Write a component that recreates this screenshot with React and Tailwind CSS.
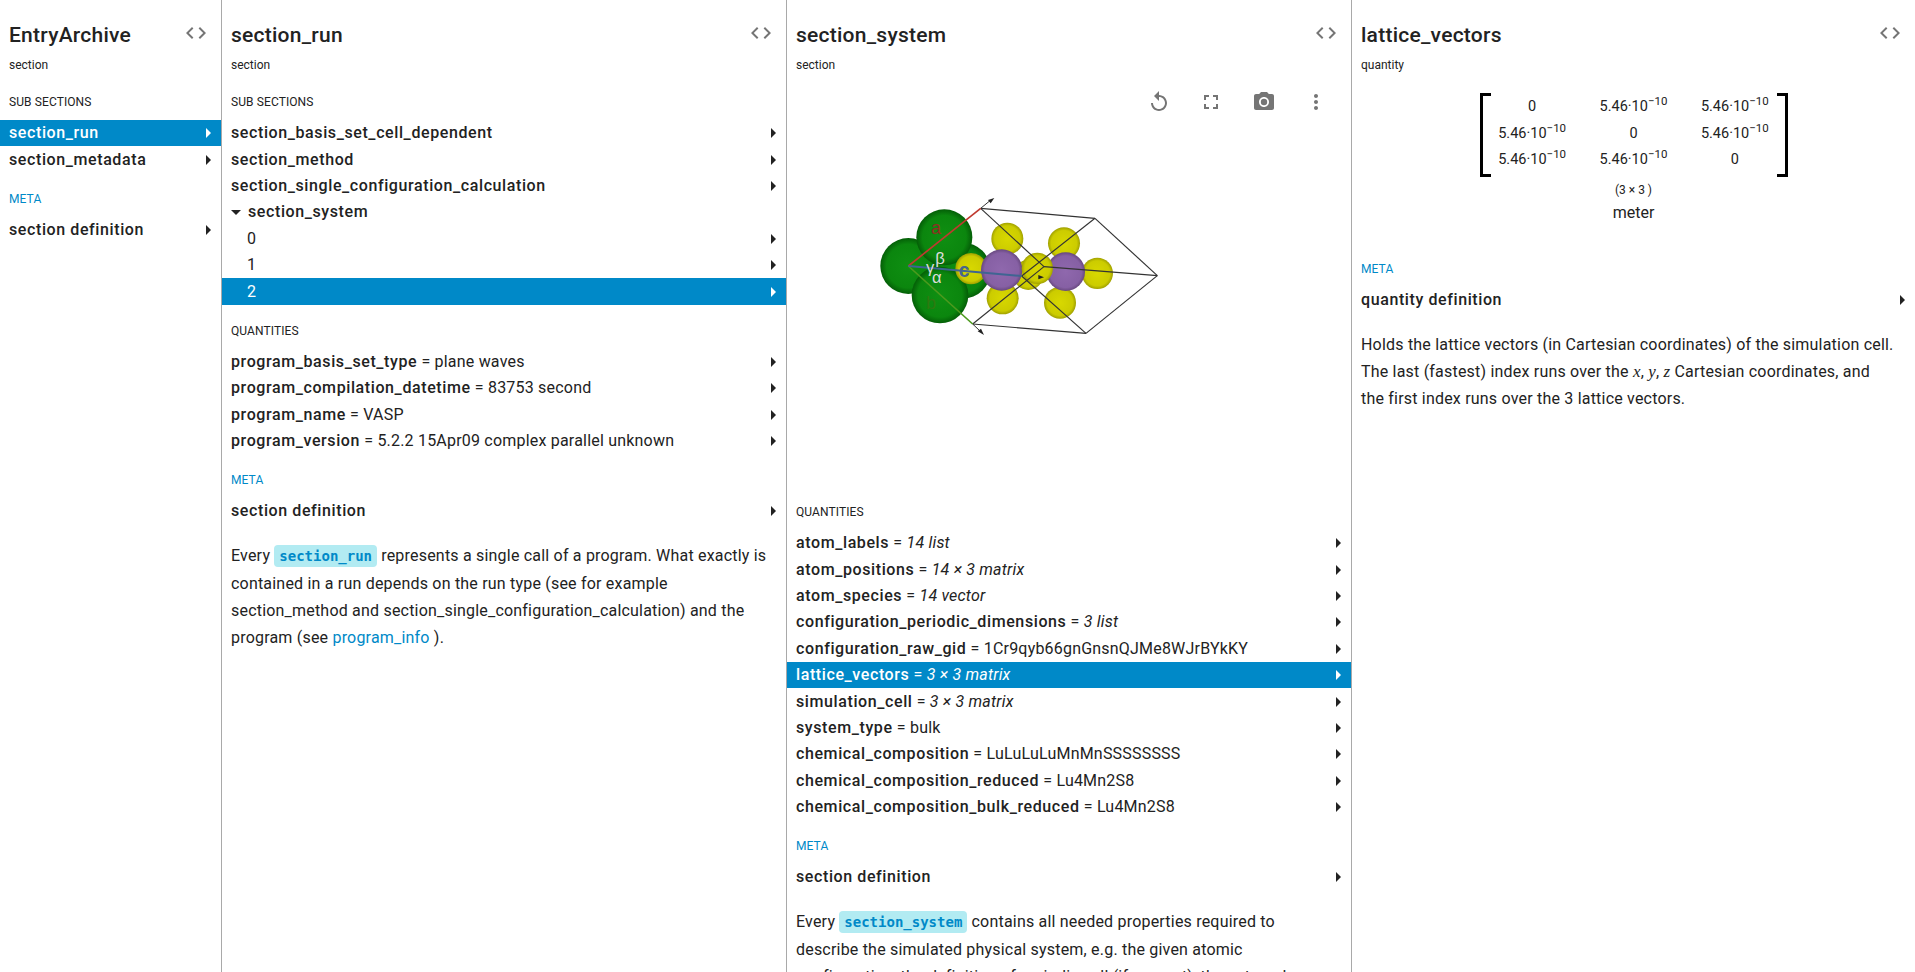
import { MdArrowDropDown, MdArrowRight, MdCameraAlt, MdCode, MdFullscreen, MdMoreVert, MdReplay } from "react-icons/md";

const Column = ({ title, kind, className, children }) => (
  <div className={`h-[972px] shrink-0 overflow-hidden border-r border-[#a9a9a9] last:border-r-0 ${className}`}>
    <div className="relative px-[9px] pt-[20px]">
      <h2 className="h-[30px] text-[21px] leading-[30px] font-medium tracking-[0.25px]">{title}</h2>
      <div className="mt-[6px] h-[18px] text-[12px] leading-[18px]">{kind}</div>
      <MdCode className="absolute right-[13px] top-[21px] text-[#757575]" size={24} />
    </div>
    {children}
  </div>
);

const Label = ({ children, meta, className = "mt-[17px]" }) => (
  <div className={`mb-[9px] h-[18px] px-[9px] text-[12px] leading-[18px] tracking-[0.1px] ${meta ? "text-[#0089c8]" : ""} ${className}`}>
    {children}
  </div>
);

const Name = ({ children }) => <span className="font-medium tracking-[0.6px]">{children}</span>;

const Row = ({ children, active, inset }) => (
  <div
    className={`flex h-[26.4px] items-center pr-[1px] text-[16px] tracking-[0.2px] ${inset ? "pl-[25px]" : "pl-[9px]"} ${
      active ? "bg-[#0089c8] text-white" : ""
    }`}
  >
    <div className="min-w-0 flex-1 truncate">{children}</div>
    <MdArrowRight size={24} className="shrink-0" />
  </div>
);

const Q = ({ name, value, italic, active }) => (
  <Row active={active}>
    <Name>{name}</Name> = {italic ? <i>{value}</i> : value}
  </Row>
);

const Code = ({ children }) => (
  <code className="rounded-[4px] bg-[#b2ebf2] px-[5px] py-[3px] font-['DejaVu_Sans_Mono',monospace] text-[14px] font-bold tracking-normal text-[#0089c8]">
    {children}
  </code>
);

const Para = ({ children, className = "mt-[17px]" }) => (
  <p className={`px-[9px] text-[16px] leading-[27px] tracking-[0.2px] ${className}`}>{children}</p>
);

const Math = ({ children }) => <i className="font-['Liberation_Serif',serif] text-[17px]">{children}</i>;

const Sphere = ({ x, y, r, fill }) => <circle cx={x} cy={y} r={r} fill={`url(#${fill})`} />;

const Structure = () => {
  const O = [205, 318];
  const a = [422, 145];
  const b = [398, 492];
  const c = [545, 348];
  const ab = [612, 320];
  const ac = [765, 175];
  const bc = [738, 520];
  const abc = [952, 347];
  const edges = [[a, ab], [a, ac], [b, ab], [b, bc], [c, ac], [c, bc], [ab, abc], [ac, abc], [bc, abc]];
  return (
    <svg viewBox="0 0 1020 570" className="ml-[53px] mt-[34px] block h-[190px] w-[340px]">
      <defs>
        <radialGradient id="green">
          <stop offset="0%" stopColor="#0f8f12" />
          <stop offset="78%" stopColor="#0b860e" />
          <stop offset="100%" stopColor="#045e07" />
        </radialGradient>
        <radialGradient id="yellow">
          <stop offset="0%" stopColor="#d8d800" />
          <stop offset="80%" stopColor="#cccc00" />
          <stop offset="100%" stopColor="#a0a000" />
        </radialGradient>
        <radialGradient id="purple">
          <stop offset="0%" stopColor="#8f68ad" />
          <stop offset="82%" stopColor="#8660a4" />
          <stop offset="100%" stopColor="#68487f" />
        </radialGradient>
      </defs>
      <Sphere x={368} y={332} r={84} fill="green" />
      <Sphere x={205} y={318} r={84} fill="green" />
      <Sphere x={313} y={232} r={84} fill="green" />
      <Sphere x={300} y={405} r={85} fill="green" />
      <Sphere x={393} y={326} r={47} fill="yellow" />
      <Sphere x={565} y={345} r={45} fill="yellow" />
      <Sphere x={502} y={236} r={48} fill="yellow" />
      <Sphere x={672} y={250} r={48} fill="yellow" />
      <Sphere x={772} y={340} r={47} fill="yellow" />
      <Sphere x={488} y={415} r={48} fill="yellow" />
      <Sphere x={660} y={428} r={48} fill="yellow" />
      <Sphere x={485} y={330} r={62} fill="purple" />
      <Sphere x={677} y={335} r={58} fill="purple" />
      <Sphere x={592} y={325} r={47} fill="yellow" />
      {edges.map(([p, q], i) => (
        <line key={i} x1={p[0]} y1={p[1]} x2={q[0]} y2={q[1]} stroke="#333" strokeWidth="3.5" />
      ))}
      <line x1={a[0]} y1={a[1]} x2="450" y2="122" stroke="#333" strokeWidth="3" />
      <polygon points="463,114 444,120 452,130" fill="#222" />
      <line x1={b[0]} y1={b[1]} x2="420" y2="513" stroke="#333" strokeWidth="3" />
      <polygon points="432,525 413,514 423,506" fill="#222" />
      <polygon points="612,352 595,345 595,358" fill="#222" />
      <line x1={O[0]} y1={O[1]} x2={a[0]} y2={a[1]} stroke="#c0392f" strokeWidth="5" />
      <line x1={O[0]} y1={O[1]} x2={b[0]} y2={b[1]} stroke="#4c9a1d" strokeWidth="5" />
      <line x1={O[0]} y1={O[1]} x2={c[0]} y2={c[1]} stroke="#3f6592" strokeWidth="6" />
      <g fontFamily="'Liberation Sans', sans-serif" fontSize="54">
        <text x="273" y="222" fill="#8e2f22">a</text>
        <text x="258" y="446" fill="#2c7a10">b</text>
        <text x="356" y="352" fill="#47658c" fontWeight="700" fontSize="58">c</text>
        <text x="276" y="370" fill="#dddddd" fontSize="50">α</text>
        <text x="286" y="312" fill="#dddddd" fontSize="50">β</text>
        <text x="258" y="338" fill="#dddddd" fontSize="50">γ</text>
      </g>
    </svg>
  );
};

const Val = () => (
  <span>
    5.46·10<sup className="text-[11.5px]">−10</sup>
  </span>
);

const Matrix = () => {
  const cells = [0, 1, 2, 3, 4, 5, 6, 7, 8];
  return (
    <div className="mt-[19px] flex justify-center">
      <div className="w-[11px] border-y-[3px] border-l-[3px] border-black" />
      <div className="h-[84px] w-[286px]">
        <div className="-mx-[9px] grid grid-cols-3 justify-items-center pt-[1px] text-[14.5px] leading-[26.5px]">
          {cells.map((i) => (
            <div key={i}>{i % 4 === 0 ? "0" : <Val />}</div>
          ))}
        </div>
      </div>
      <div className="w-[11px] border-y-[3px] border-r-[3px] border-black" />
    </div>
  );
};

export default function App() {
  return (
    <div className="flex h-[972px] overflow-hidden bg-white font-['Roboto',sans-serif] text-[#222]">
      <Column title="EntryArchive" kind="section" className="w-[222px]">
        <Label className="mt-[19px]">SUB SECTIONS</Label>
        <Row active><Name>section_run</Name></Row>
        <Row><Name>section_metadata</Name></Row>
        <Label meta>META</Label>
        <Row><Name>section definition</Name></Row>
      </Column>

      <Column title="section_run" kind="section" className="w-[565px]">
        <Label className="mt-[19px]">SUB SECTIONS</Label>
        <Row><Name>section_basis_set_cell_dependent</Name></Row>
        <Row><Name>section_method</Name></Row>
        <Row><Name>section_single_configuration_calculation</Name></Row>
        <div className="flex h-[26.4px] items-center pl-[2px] text-[16px]">
          <MdArrowDropDown size={24} />
          <Name>section_system</Name>
        </div>
        <Row inset>0</Row>
        <Row inset>1</Row>
        <Row inset active>2</Row>
        <Label>QUANTITIES</Label>
        <Q name="program_basis_set_type" value="plane waves" />
        <Q name="program_compilation_datetime" value="83753 second" />
        <Q name="program_name" value="VASP" />
        <Q name="program_version" value="5.2.2 15Apr09 complex parallel unknown" />
        <Label meta>META</Label>
        <Row><Name>section definition</Name></Row>
        <Para>
          Every <Code>section_run</Code> represents a single call of a program. What exactly is contained in a run
          depends on the run type (see for example<br />
          section_method and section_single_configuration_calculation) and the<br />
          program (see <span className="text-[#0089c8]">program_info</span> ).
        </Para>
      </Column>

      <Column title="section_system" kind="section" className="w-[565px]">
        <div className="mt-[4px] flex justify-end gap-[28.5px] pr-[23px] pt-[12px] text-[#757575]">
          <MdReplay size={24} />
          <MdFullscreen size={24} />
          <MdCameraAlt size={24} />
          <MdMoreVert size={24} />
        </div>
        <div className="pt-[12px]">
          <Structure />
        </div>
        <Label className="mt-[153px]">QUANTITIES</Label>
        <Q name="atom_labels" value="14 list" italic />
        <Q name="atom_positions" value="14 × 3 matrix" italic />
        <Q name="atom_species" value="14 vector" italic />
        <Q name="configuration_periodic_dimensions" value="3 list" italic />
        <Q name="configuration_raw_gid" value="1Cr9qyb66gnGnsnQJMe8WJrBYkKY" />
        <Q name="lattice_vectors" value="3 × 3 matrix" italic active />
        <Q name="simulation_cell" value="3 × 3 matrix" italic />
        <Q name="system_type" value="bulk" />
        <Q name="chemical_composition" value="LuLuLuLuMnMnSSSSSSSS" />
        <Q name="chemical_composition_reduced" value="Lu4Mn2S8" />
        <Q name="chemical_composition_bulk_reduced" value="Lu4Mn2S8" />
        <Label meta>META</Label>
        <Row><Name>section definition</Name></Row>
        <Para>
          Every <Code>section_system</Code> contains all needed properties required to<br />
          describe the simulated physical system, e.g. the given atomic<br />
          configuration, the definition of periodic cell (if present), the external
        </Para>
      </Column>

      <Column title="lattice_vectors" kind="quantity" className="flex-1 shrink">
        <Matrix />
        <div className="mt-[4px] h-[18px] text-center text-[12px] leading-[18px]">(3 × 3 )</div>
        <div className="mt-[1px] h-[26px] text-center text-[16px] leading-[26px]">meter</div>
        <Label meta className="mt-[34px]">META</Label>
        <Row><Name>quantity definition</Name></Row>
        <Para className="mt-[18px]">
          Holds the lattice vectors (in Cartesian coordinates) of the simulation cell.<br />
          The last (fastest) index runs over the <Math>x</Math>, <Math>y</Math>, <Math>z</Math> Cartesian coordinates,
          and<br />
          the first index runs over the 3 lattice vectors.
        </Para>
      </Column>
    </div>
  );
}
